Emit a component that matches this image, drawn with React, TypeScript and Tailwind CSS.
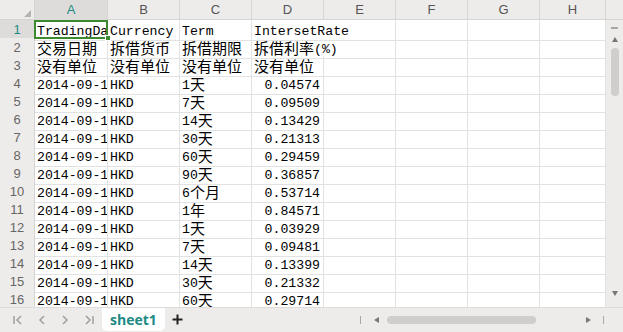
import React from "react";

const cols = ["A", "B", "C", "D", "E", "F", "G", "H"];

const terms = ["1天", "7天", "14天", "30天", "60天", "90天", "6个月", "1年", "1天", "7天", "14天", "30天", "60天"];
const rates = ["0.04574", "0.09509", "0.13429", "0.21313", "0.29459", "0.36857", "0.53714", "0.84571", "0.03929", "0.09481", "0.13399", "0.21332", "0.29714"];

type Cell = { t: string; right?: boolean; spill?: boolean };

const rows: Cell[][] = [
  [{ t: "TradingDate" }, { t: "Currency" }, { t: "Term" }, { t: "IntersetRate", spill: true }],
  [{ t: "交易日期" }, { t: "拆借货币" }, { t: "拆借期限" }, { t: "拆借利率(%)", spill: true }],
  [{ t: "没有单位" }, { t: "没有单位" }, { t: "没有单位" }, { t: "没有单位" }],
  ...terms.map((term, i) => [
    { t: "2014-09-10" },
    { t: "HKD" },
    { t: term },
    { t: rates[i], right: true },
  ]),
];

function runs(s: string) {
  const out: React.ReactNode[] = [];
  const re = /([\u3000-\u9fff]+)|([^\u3000-\u9fff]+)/g;
  let m: RegExpExecArray | null;
  let k = 0;
  while ((m = re.exec(s))) {
    if (m[1]) {
      out.push(
        <span key={k++} className="relative top-[-2px] text-[15px] leading-none shrink-0" style={{ fontFamily: '"Noto Sans CJK SC", sans-serif' }}>
          {m[1]}
        </span>
      );
    } else {
      out.push(
        <span key={k++} className="leading-none shrink-0 whitespace-pre">
          {m[2]}
        </span>
      );
    }
  }
  return out;
}

const gridCols = "grid grid-cols-[35px_73px_72px_72px_72px_72px_72px_72px_66px]";

export default function App() {
  return (
    <div className="w-[623px] h-[332px] overflow-hidden bg-white flex flex-col select-none" style={{ fontFamily: '"Liberation Sans", Arial, sans-serif' }}>
      {/* column header */}
      <div className="flex h-[20px] bg-[#eeecea] border-b border-[#d6d4d2] shrink-0">
        <div className={gridCols}>
          <div className="relative border-r border-[#d6d4d2]">
            <div className="absolute right-[3px] bottom-[3px] w-0 h-0 border-l-[7px] border-l-transparent border-b-[7px] border-b-[#b5b3b1]" />
          </div>
          {cols.map((c, i) => (
            <div
              key={c}
              className={`flex items-center justify-center text-[13px] border-r border-[#d6d4d2] ${i === 0 ? "bg-[#dedcda] text-[#1d8a84]" : "text-[#555]"}`}
            >
              {c}
            </div>
          ))}
        </div>
        <div className="flex-1" />
      </div>

      {/* body */}
      <div className="flex flex-1 min-h-0">
        <div className="relative w-[606px] overflow-hidden">
          {rows.map((r, ri) => (
            <div key={ri} className={`${gridCols} h-[18px]`}>
              <div
                className={`flex items-center justify-center text-[13px] border-r border-b border-[#d6d4d2] ${ri === 0 ? "bg-[#dedcda] text-[#1d8a84]" : "bg-[#eeecea] text-[#666]"}`}
              >
                {ri + 1}
              </div>
              {cols.map((c, ci) => {
                const cell = r[ci];
                return (
                  <div
                    key={c}
                    className={`flex items-center pt-[3px] whitespace-nowrap border-b border-r border-b-[#e2e2e2] text-[13.2px] text-black ${cell?.spill ? "overflow-visible border-r-transparent" : "overflow-hidden border-r-[#e2e2e2]"} ${cell?.right ? "justify-end pr-[3px]" : "pl-[2px]"}`}
                    style={{ fontFamily: '"Liberation Mono", "Noto Sans CJK SC", monospace' }}
                  >
                    {cell ? runs(cell.t) : null}
                  </div>
                );
              })}
            </div>
          ))}
          {/* selection */}
          <div className="absolute left-[34px] top-0 w-[74px] h-[19px] border-2 border-[#3b8a2e]" />
          <div className="absolute left-[105px] top-[15px] w-[6px] h-[6px] bg-[#3b8a2e] border border-white" />
        </div>
        {/* vertical scrollbar */}
        <div className="w-[17px] bg-[#eeecea] flex flex-col items-center">
          <div className="mt-[7px] w-[7px] h-[2px] bg-[#a9a7a5]" />
          <div className="mt-[8px] w-0 h-0 border-l-[3.5px] border-l-transparent border-r-[3.5px] border-r-transparent border-b-[5px] border-b-[#777]" />
          <div className="mt-[6px] w-[8px] h-[48px] rounded-full bg-[#d0cecc]" />
          <div className="flex-1" />
          <div className="mb-[11px] w-0 h-0 border-l-[3.5px] border-l-transparent border-r-[3.5px] border-r-transparent border-t-[5px] border-t-[#777]" />
        </div>
      </div>

      {/* bottom bar */}
      <div className="h-[25px] shrink-0 bg-[#eeecea] flex items-start border-t border-[#dedcda]">
        <div className="flex items-center h-[23px] pl-[13px] gap-[15px] text-[#a09e9c]">
          <svg width="10" height="10" viewBox="0 0 10 10"><path d="M1 1v8M8 1L4 5l4 4" stroke="currentColor" strokeWidth="1.5" fill="none" /></svg>
          <svg width="8" height="10" viewBox="0 0 8 10"><path d="M6 1L2 5l4 4" stroke="currentColor" strokeWidth="1.5" fill="none" /></svg>
          <svg width="8" height="10" viewBox="0 0 8 10"><path d="M2 1l4 4-4 4" stroke="currentColor" strokeWidth="1.5" fill="none" /></svg>
          <svg width="10" height="10" viewBox="0 0 10 10"><path d="M2 1l4 4-4 4M9 1v8" stroke="currentColor" strokeWidth="1.5" fill="none" /></svg>
        </div>
        <div className="ml-[8px] w-[63px] h-[23px] bg-white rounded-b-[5px] flex items-center justify-center text-[14px] font-bold text-[#1d8a84]" style={{ fontFamily: '"Open Sans", "Liberation Sans", sans-serif' }}>
          sheet1
        </div>
        <div className="ml-[7px] h-[23px] flex items-center">
          <svg width="11" height="11" viewBox="0 0 11 11"><path d="M5.5 0.5v10M0.5 5.5h10" stroke="#222" strokeWidth="2" /></svg>
        </div>
        <div className="flex-1" />
        <div className="h-[23px] flex items-center pr-[19px]">
          <div className="w-[1px] h-[8px] bg-[#a9a7a5]" />
          <div className="ml-[13px] w-0 h-0 border-t-[3.5px] border-t-transparent border-b-[3.5px] border-b-transparent border-r-[5px] border-r-[#777]" />
          <div className="ml-[8px] w-[149px] h-[8px] rounded-full bg-[#d0cecc]" />
          <div className="ml-[50px] w-0 h-0 border-t-[3.5px] border-t-transparent border-b-[3.5px] border-b-transparent border-l-[5px] border-l-[#777]" />
          <div className="ml-[12px] w-[1px] h-[8px] bg-[#a9a7a5]" />
        </div>
      </div>
    </div>
  );
}
